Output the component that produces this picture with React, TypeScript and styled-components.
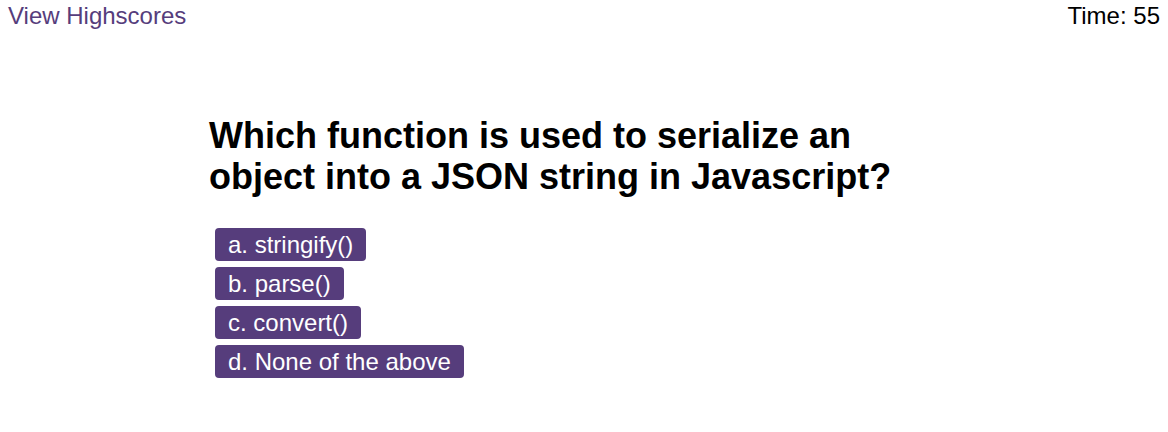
import { createGlobalStyle, styled } from "styled-components";

const GlobalStyle = createGlobalStyle`
  body {
    margin: 0;
    font-family: "Liberation Sans", Arial, sans-serif;
    background: #ffffff;
    color: #000000;
  }
`;

const Header = styled.header`
  display: flex;
  justify-content: space-between;
  align-items: flex-start;
  padding: 2px 8px 0 8px;
  font-size: 24px;
  line-height: 28px;
`;

const HighscoreLink = styled.a`
  color: #563d7c;
  text-decoration: none;
  cursor: pointer;
`;

const Timer = styled.div`
  color: #000000;
`;

const Quiz = styled.main`
  width: 750px;
  margin: 0 auto;
  padding-top: 85px;
`;

const Question = styled.h1`
  font-size: 36px;
  font-weight: 700;
  line-height: 41px;
  margin: 0 0 31px 0;
  width: 700px;
`;

const Choices = styled.div`
  display: flex;
  flex-direction: column;
  align-items: flex-start;
  gap: 6px;
  padding-left: 6px;
`;

const Choice = styled.button`
  font-family: "Liberation Sans", Arial, sans-serif;
  font-size: 24px;
  line-height: 27px;
  color: #ffffff;
  background: #563d7c;
  border: none;
  border-radius: 4px;
  padding: 3px 13px;
  cursor: pointer;
`;

const choices = [
  "a. stringify()",
  "b. parse()",
  "c. convert()",
  "d. None of the above",
];

export default function App() {
  return (
    <>
      <GlobalStyle />
      <Header>
        <HighscoreLink>View Highscores</HighscoreLink>
        <Timer>Time: 55</Timer>
      </Header>
      <Quiz>
        <Question>
          Which function is used to serialize an object into a JSON string in
          Javascript?
        </Question>
        <Choices>
          {choices.map((c) => (
            <Choice key={c}>{c}</Choice>
          ))}
        </Choices>
      </Quiz>
    </>
  );
}
